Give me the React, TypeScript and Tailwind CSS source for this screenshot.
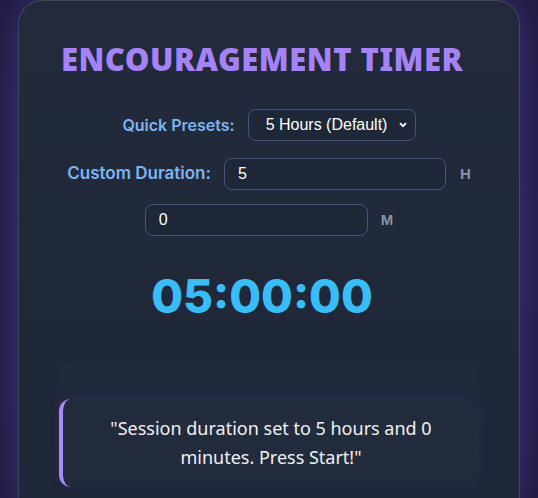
import React from "react";

export default function App() {
  return (
    <div className="h-[498px] w-full overflow-hidden bg-[radial-gradient(ellipse_at_center,#2e2a60_0%,#24204a_70%,#1f1c40_100%)] px-[18px]">
      <div className="h-[520px] rounded-[24px] border border-white/15 bg-[linear-gradient(180deg,#222a3c_0%,#1e2738_100%)] px-[40px] pt-[36px] shadow-[0_0_30px_rgba(110,80,220,0.35)]">
        <h1 className="whitespace-nowrap pr-[14px] text-center font-[family-name:'Noto_Sans',Inter,sans-serif] text-[31px] font-black leading-[44px] tracking-[0.5px] text-[#a682f7]">
          ENCOURAGEMENT TIMER
        </h1>

        <div className="mt-[28px] flex items-center justify-center gap-[13px]">
          <span className="font-[family-name:Inter,'Noto_Sans',sans-serif] text-[16px] font-semibold text-[#7db4ef]">
            Quick Presets:
          </span>
          <div className="relative">
            <select
              className="h-[32px] w-[168px] appearance-none rounded-[8px] border border-[#4a5178] bg-[#1e2738] pl-[17px] font-[family-name:'Liberation_Sans',Arial,sans-serif] text-[16px] text-white outline-none"
              defaultValue="5"
            >
              <option value="5">5 Hours (Default)</option>
            </select>
            <svg
              className="pointer-events-none absolute right-[9px] top-[13px]"
              width="8"
              height="6"
              viewBox="0 0 8 6"
            >
              <path d="M1 1.2 L4 4.2 L7 1.2" stroke="white" strokeWidth="1.8" fill="none" />
            </svg>
          </div>
        </div>

        <div className="mt-[17px] flex flex-wrap items-center justify-center gap-x-[13px] gap-y-[14px]">
          <span className="font-[family-name:Inter,'Noto_Sans',sans-serif] text-[17px] font-semibold text-[#7db4ef]">
            Custom Duration:
          </span>
          <input
            className="h-[32px] w-[222px] rounded-[8px] border border-[#4a5178] bg-[#1e2738] pl-[13px] font-[family-name:'Liberation_Sans',Arial,sans-serif] text-[16px] text-white outline-none"
            defaultValue="5"
          />
          <span className="ml-[1px] font-[family-name:'Liberation_Sans',Arial,sans-serif] text-[15px] font-bold text-[#8793a6]">
            H
          </span>
          <input
            className="h-[32px] w-[223px] rounded-[8px] border border-[#4a5178] bg-[#1e2738] pl-[13px] font-[family-name:'Liberation_Sans',Arial,sans-serif] text-[16px] text-white outline-none"
            defaultValue="0"
          />
          <span className="font-[family-name:'Liberation_Sans',Arial,sans-serif] text-[15px] font-bold text-[#8793a6]">
            M
          </span>
        </div>

        <div className="mt-[30px] pr-[14px] text-center font-[family-name:Inter,'Noto_Sans',sans-serif] text-[46px] font-extrabold leading-[60px] text-[#38bdf8]">
          05:00:00
        </div>

        <div className="mt-[36px] h-[30px] rounded-[12px] bg-white/[0.008]" />

        <div className="mt-[7px] rounded-[12px] border-l-[4px] border-[#a78bfa] bg-white/[0.02] px-[30px] py-[15px] shadow-[0_-2px_10px_rgba(110,80,220,0.12)]">
          <p className="text-center font-[family-name:'Noto_Sans',Lato,sans-serif] text-[18px] leading-[29px] text-[#eef1f6]">
            "Session duration set to 5 hours and 0 minutes. Press Start!"
          </p>
        </div>
      </div>
    </div>
  );
}
